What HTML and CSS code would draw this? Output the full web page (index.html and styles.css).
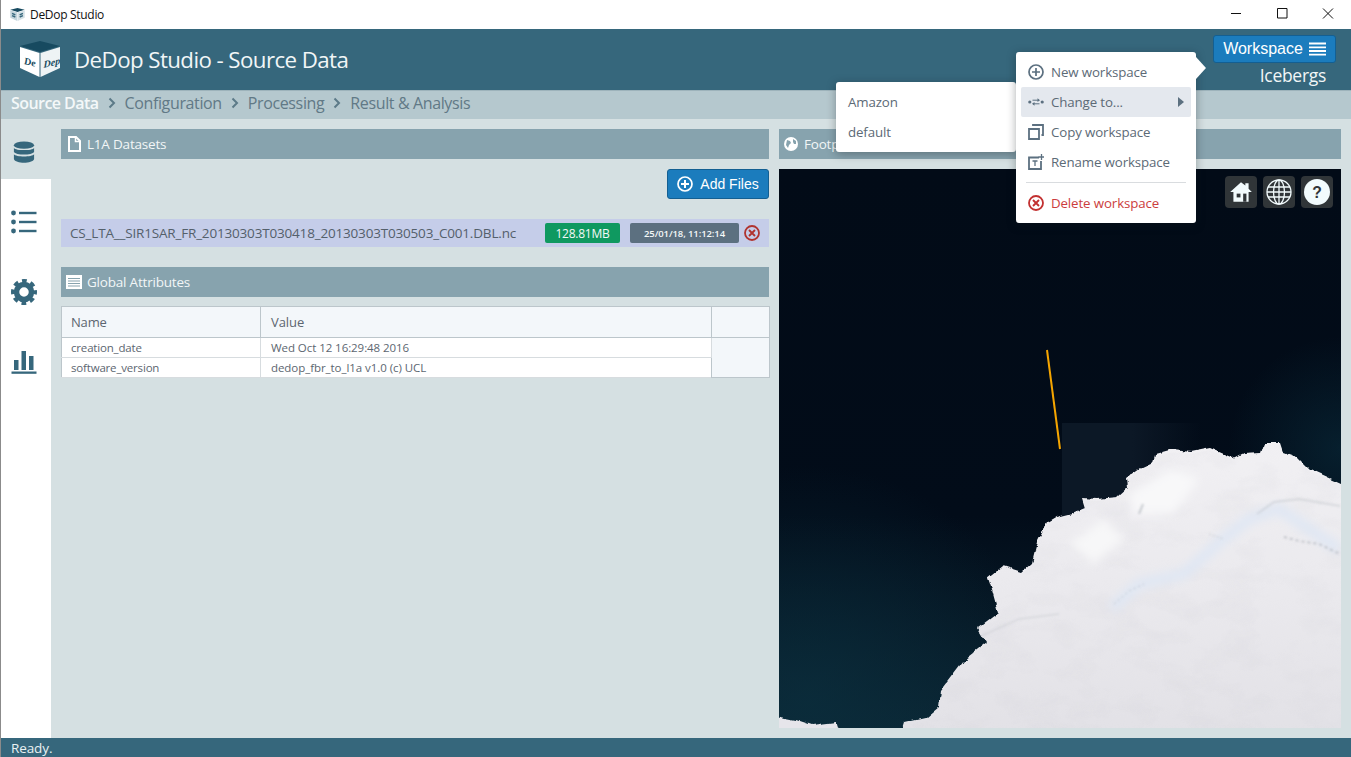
FILE: index.html
```html
<!DOCTYPE html>
<html lang="en">
<head>
<meta charset="utf-8">
<title>DeDop Studio</title>
<link rel="stylesheet" href="styles.css">
</head>
<body>
<div class="app">
  <div class="titlebar">
    <svg class="title-icon" viewBox="0 0 40 36"><path d="M20 0 40 5 20 11 0 5Z" fill="#174a60"/><path d="M0 6 19.500 12V36L0 27Z" fill="#c3d4dc"/><path d="M20.500 12 40 6V27L20.500 36Z" fill="#d5e1e6"/><path d="M5 15 14 19M5 21 14 25M26 19 35 15M26 25 35 21" stroke="#36677c" stroke-width="4"/></svg>
    <span class="title-text">DeDop Studio</span>
    <div class="winbtns">
      <svg viewBox="0 0 46 29"><path d="M18 13.500h10" stroke="#111" fill="none"/></svg>
      <svg viewBox="0 0 46 29"><path d="M18.500 8.500h9.500v9.500h-9.500z" stroke="#111" fill="none"/></svg>
      <svg viewBox="0 0 46 29"><path d="M18 8.500 28 18.500M28 8.500 18 18.500" stroke="#111" fill="none"/></svg>
    </div>
  </div>

  <header class="header">
    <div class="brand">
      <svg class="logo" viewBox="0 0 40 36">
        <path d="M20 0 40 5 20 11 0 5Z" fill="#174a60"/>
        <path d="M0 6 19.500 12V36L0 27Z" fill="#fff"/>
        <path d="M20.500 12 40 6V27L20.500 36Z" fill="#eef3f5"/>
        <text class="logo-text" transform="translate(4 23) skewY(14)">De</text>
        <text class="logo-text" transform="translate(23.500 27) skewY(-14)">Dep</text>
      </svg>
      <h1 class="app-title">DeDop Studio - Source Data</h1>
    </div>
    <div class="ws">
      <button class="ws-btn">Workspace
        <svg class="ws-burger" viewBox="0 0 17 14"><path d="M0 1.500h17M0 5.300h17M0 9h17M0 12.700h17" stroke="#fff" stroke-width="1.800"/></svg>
      </button>
      <div class="ws-name">Icebergs</div>
    </div>
  </header>

  <nav class="crumbs">
    <span class="crumb crumb-on">Source Data</span>
    <svg class="chev" viewBox="0 0 8 12"><path d="M1.500 1.500 6 6l-4.500 4.500" fill="none" stroke="#5c7a88" stroke-width="2"/></svg>
    <span class="crumb">Configuration</span>
    <svg class="chev" viewBox="0 0 8 12"><path d="M1.500 1.500 6 6l-4.500 4.500" fill="none" stroke="#5c7a88" stroke-width="2"/></svg>
    <span class="crumb">Processing</span>
    <svg class="chev" viewBox="0 0 8 12"><path d="M1.500 1.500 6 6l-4.500 4.500" fill="none" stroke="#5c7a88" stroke-width="2"/></svg>
    <span class="crumb">Result &amp; Analysis</span>
  </nav>

  <div class="body">
    <aside class="side">
      <div class="side-item side-on">
        <svg class="side-icon" viewBox="0 0 24 24"><ellipse cx="12" cy="4.500" rx="11" ry="4" fill="#36677c"/><path d="M1 7.500c2 3.200 20 3.200 22 0v4.500c-2 3.700-20 3.700-22 0ZM1 14.500c2 3.200 20 3.200 22 0v5c-1.500 5.500-20.500 5.500-22 0Z" fill="#36677c"/></svg>
      </div>
      <div class="side-item">
        <svg class="side-icon side-list" viewBox="0 0 26 24"><g fill="#36677c"><circle cx="2.500" cy="3" r="2.400"/><circle cx="2.500" cy="12" r="2.400"/><circle cx="2.500" cy="21" r="2.400"/><rect x="8" y="1.800" width="17.500" height="2.400"/><rect x="8" y="10.800" width="17.500" height="2.400"/><rect x="8" y="19.800" width="17.500" height="2.400"/></g></svg>
      </div>
      <div class="side-item">
        <svg class="side-icon side-gear" viewBox="0 0 26 26"><circle cx="13" cy="13" r="7.500" fill="none" stroke="#36677c" stroke-width="5.500"/><circle cx="13" cy="13" r="11" fill="none" stroke="#36677c" stroke-width="4" stroke-dasharray="4.640 4" stroke-dashoffset="2.300"/></svg>
      </div>
      <div class="side-item">
        <svg class="side-icon side-list" viewBox="0 0 26 24"><g fill="#36677c"><rect x="3" y="10" width="4.500" height="10"/><rect x="10.500" y="1" width="4.500" height="19"/><rect x="18" y="6" width="4.500" height="14"/><rect x="0.500" y="21.500" width="25" height="2.300"/></g></svg>
      </div>
    </aside>

    <main class="content">
      <section class="col-left">
        <div class="panel-head">
          <svg class="ph-icon" viewBox="0 0 13 16"><path d="M1 1h7l4 4v10H1Z" fill="none" stroke="#fff" stroke-width="2"/><path d="M7.500 1v4.500H12" fill="none" stroke="#fff" stroke-width="1.500"/></svg>
          <span>L1A Datasets</span>
        </div>
        <div class="toolbar">
          <button class="add-btn">
            <svg class="plus" viewBox="0 0 16 16"><circle cx="8" cy="8" r="7" fill="none" stroke="#fff" stroke-width="1.700"/><path d="M8 4v8M4 8h8" stroke="#fff" stroke-width="2"/></svg>
            Add Files
          </button>
        </div>
        <div class="file-row">
          <span class="file-name">CS_LTA__SIR1SAR_FR_20130303T030418_20130303T030503_C001.DBL.nc</span>
          <span class="badge badge-size">128.81MB</span>
          <span class="badge badge-date">25/01/18, 11:12:14</span>
          <svg class="rm" viewBox="0 0 16 16"><circle cx="8" cy="8" r="7" fill="none" stroke="#b0332f" stroke-width="1.800"/><path d="M5 5l6 6M11 5l-6 6" stroke="#b0332f" stroke-width="1.900"/></svg>
        </div>
        <div class="panel-head panel-head-tight">
          <svg class="ph-icon ph-wide" viewBox="0 0 16 14"><rect width="16" height="14" fill="#fff"/><path d="M2 3.500h12M2 6h12M2 8.500h12M2 11h12" stroke="#87a3ae"/></svg>
          <span>Global Attributes</span>
        </div>
        <table class="attrs">
          <colgroup><col class="c1"><col class="c2"><col class="c3"></colgroup>
          <thead><tr><th class="cell-name">Name</th><th>Value</th><th></th></tr></thead>
          <tbody>
            <tr><td class="cell-name">creation_date</td><td>Wed Oct 12 16:29:48 2016</td><td class="filler" rowspan="2"></td></tr>
            <tr><td class="cell-name">software_version</td><td>dedop_fbr_to_l1a v1.0 (c) UCL</td></tr>
          </tbody>
        </table>
      </section>

      <section class="col-right">
        <div class="panel-head">
          <svg class="ph-icon ph-globe" viewBox="0 0 14 14"><circle cx="7" cy="7" r="7" fill="#fff"/><path d="M3 3l3 1 1 2-2 2-1 3-2-3ZM9 2l3 2 0 3-2 0-1-2Z" fill="#87a3ae"/></svg>
          <span>Footprint</span>
        </div>
        <div class="map">
          <svg class="map-svg" viewBox="0 0 562 559" preserveAspectRatio="none">
            <defs>
              <linearGradient id="sea" x1="0" y1="0" x2="0" y2="1">
                <stop offset="0" stop-color="#020b17"/>
                <stop offset=".62" stop-color="#020c19"/>
                <stop offset="1" stop-color="#0a2533"/>
              </linearGradient>
              <radialGradient id="teal" cx=".05" cy=".95" r=".42">
                <stop offset="0" stop-color="#0b2f3e" stop-opacity=".7"/>
                <stop offset="1" stop-color="#0b2f3e" stop-opacity="0"/>
              </radialGradient>
              <radialGradient id="teal2" cx="1" cy=".5" r=".2">
                <stop offset="0" stop-color="#0a2c3c" stop-opacity=".6"/>
                <stop offset="1" stop-color="#0a2c3c" stop-opacity="0"/>
              </radialGradient>
              <linearGradient id="patch" x1="0" y1="0" x2="1" y2="0">
                <stop offset="0" stop-color="#0c1826"/>
                <stop offset=".5" stop-color="#0c1826"/>
                <stop offset="1" stop-color="#0c1826" stop-opacity="0"/>
              </linearGradient>
              <linearGradient id="snow" x1="0" y1="0" x2="0" y2="1">
                <stop offset="0" stop-color="#f1f0f3"/>
                <stop offset=".45" stop-color="#ebeaee"/>
                <stop offset="1" stop-color="#e2e1e6"/>
              </linearGradient>
              <filter id="coast" x="-5%" y="-5%" width="110%" height="110%">
                <feTurbulence type="fractalNoise" baseFrequency=".07" numOctaves="4" seed="7" result="n"/>
                <feDisplacementMap in="SourceGraphic" in2="n" scale="7" xChannelSelector="R" yChannelSelector="G" result="d"/>
                <feGaussianBlur in="d" stdDeviation=".5"/>
              </filter>
              <filter id="hills" x="0" y="0" width="100%" height="100%">
                <feTurbulence type="fractalNoise" baseFrequency=".025 .04" numOctaves="5" seed="11" result="n"/>
                <feColorMatrix in="n" type="matrix" values="0 0 0 0 .55  0 0 0 0 .55  0 0 0 0 .6  1.600 0 0 0 -.72"/>
              </filter>
              <filter id="softer" x="-10%" y="-10%" width="120%" height="120%"><feGaussianBlur stdDeviation="5"/></filter>
              <filter id="soft" x="-10%" y="-10%" width="120%" height="120%"><feGaussianBlur stdDeviation=".8"/></filter>
              <clipPath id="land-clip">
                <path d="M562 315 531 303 518 290 504 285 501 276 484 276 481 285 464 286 454 291 431 281 411 285 394 283 376 288 374 295 361 301 348 310 349 321 339 330 318 332 303 331 306 341 294 346 278 350 268 356 258 376 253 396 243 405 224 399 209 411 213 423 219 445 199 460 208 475 185 493 162 523 160 540 147 551 125 556 120 559H562Z"/>
              </clipPath>
            </defs>
            <rect width="562" height="559" fill="url(#sea)"/>
            <rect width="562" height="559" fill="url(#teal)"/>
            <rect width="562" height="559" fill="url(#teal2)"/>
            <rect x="283" y="254" width="140" height="110" fill="url(#patch)"/>
            <g filter="url(#coast)">
              <path fill="url(#snow)" d="M570 315 562 315 531 301 518 288 504 283 501 274 484 274 481 283 464 284 454 289 431 279 411 283 394 281 376 286 374 293 361 299 348 308 349 319 339 328 318 330 303 329 306 339 294 344 278 348 268 354 258 374 253 394 243 403 224 397 209 409 213 421 219 443 199 458 208 473 185 491 162 521 160 538 147 549 125 554 120 570H570Z"/>
              <path fill="#e6e5ea" d="M-10 546 17 551 32 556 57 553 62 570H-10Z"/>
            </g>
            <g clip-path="url(#land-clip)">
              <rect width="562" height="559" filter="url(#hills)" opacity=".16"/>
              <g filter="url(#softer)">
                <path d="M333 439 360 415 405 405 442 372 470 350 500 340 560 380" fill="none" stroke="#dfe7f4" stroke-width="10"/>
                <path d="M350 325 392 300 420 310 395 345 355 345Z" fill="#f8f8f9"/>
                <path d="M290 375 325 350 345 370 315 395Z" fill="#f7f7f8"/>
              </g>
              <g filter="url(#soft)" fill="none" stroke="#7d8690">
                <path d="M364 335 360 345" stroke-opacity=".4" stroke-width="2"/>
                <path d="M478 345 495 333 520 330 561 337" stroke-opacity=".25" stroke-width="1.500"/>
                <path d="M200 468 240 450 280 445" stroke-opacity=".25"/>
                <path d="M505 368 520 372 540 375 561 385" stroke-opacity=".5" stroke-width="1.500" stroke-dasharray="3 3"/>
                <path d="M335 435 350 422 365 415" stroke-opacity=".4" stroke-dasharray="2 3"/>
                <path d="M430 365 445 370" stroke-opacity=".35" stroke-dasharray="2 2"/>
              </g>
            </g>
            <path d="M268 181 281 280" stroke="#f5a500" stroke-width="2" fill="none"/>
          </svg>
          <div class="map-ctrls">
            <button class="ctrl"><svg viewBox="0 0 24 24"><path d="M12 3 2 12h3v9h14v-9h3l-3-3V4h-3v2Z" fill="#f2fbfd"/><rect x="8" y="13.500" width="3.500" height="3.500" fill="#303538"/><rect x="14" y="13.500" width="3" height="7.500" fill="#303538"/></svg></button>
            <button class="ctrl"><svg viewBox="0 0 26 26"><g fill="none" stroke="#f2fbfd" stroke-width="1.300"><circle cx="13" cy="13" r="12"/><ellipse cx="13" cy="13" rx="5.500" ry="12"/><path d="M13 1v24M2 8h22M1 13h24M2 18h22"/></g></svg></button>
            <button class="ctrl"><svg viewBox="0 0 28 28"><circle cx="14" cy="14" r="14" fill="#f2fbfd"/><text class="q" x="14" y="20.500">?</text></svg></button>
          </div>
        </div>
      </section>
    </main>
  </div>

  <footer class="status">Ready.</footer>

  <div class="menu menu-sub">
    <div class="mi"><span>Amazon</span></div>
    <div class="mi"><span>default</span></div>
  </div>
  <div class="menu menu-main">
    <div class="mi">
      <svg class="mi-icon" viewBox="0 0 16 16"><circle cx="8" cy="8" r="7" fill="none" stroke="#5c7080" stroke-width="1.700"/><path d="M8 4v8M4 8h8" stroke="#5c7080" stroke-width="1.700"/></svg>
      <span>New workspace</span>
    </div>
    <div class="mi mi-on">
      <svg class="mi-icon" viewBox="0 0 16 16"><path d="M4.500 6.200H11M11.500 9.800H5" fill="none" stroke="#5c7080"/><circle cx="1.800" cy="8" r="1.600" fill="#5c7080"/><circle cx="14.200" cy="8" r="1.600" fill="#5c7080"/><path d="M9.500 4.200 12 6.200 9.500 8ZM6.500 8 4 9.800 6.500 11.800Z" fill="#5c7080"/></svg>
      <span>Change to...</span>
      <svg class="mi-caret" viewBox="0 0 6 10"><path d="M0 0 6 5 0 10Z" fill="#5c7080"/></svg>
    </div>
    <div class="mi">
      <svg class="mi-icon" viewBox="0 0 16 16"><path d="M1 5h10v10H1Z" fill="none" stroke="#5c7080" stroke-width="1.800"/><path d="M5 2V1h10v10h-1.500" fill="none" stroke="#5c7080" stroke-width="1.800"/></svg>
      <span>Copy workspace</span>
    </div>
    <div class="mi">
      <svg class="mi-icon" viewBox="0 0 16 16"><path d="M11 3.500H1V15h12V7" fill="none" stroke="#5c7080" stroke-width="1.800"/><path d="M4.500 7h5M7 7v5M13.500 0v6M10.500 3h6" stroke="#5c7080" stroke-width="1.300"/></svg>
      <span>Rename workspace</span>
    </div>
    <div class="mdiv"></div>
    <div class="mi mi-danger">
      <svg class="mi-icon" viewBox="0 0 16 16"><circle cx="8" cy="8" r="7" fill="none" stroke="#c23030" stroke-width="1.800"/><path d="M5 5l6 6M11 5l-6 6" stroke="#c23030" stroke-width="1.900"/></svg>
      <span>Delete workspace</span>
    </div>
    <svg class="menu-tip" viewBox="0 0 10 22"><path d="M0 0 10 11 0 22Z" fill="#fff"/></svg>
  </div>
</div>
</body>
</html>
```
FILE: styles.css
```css
* { box-sizing: border-box; }
html, body { margin: 0; height: 100%; overflow: hidden; }
body { font-family: "Open Sans", "Liberation Sans", sans-serif; color: #5c6a76; }

.app { position: relative; height: 757px; display: flex; flex-direction: column; border-left: 1px solid #8b8b8b; background: #d5e0e2; }

.titlebar { height: 29px; flex: none; background: #fff; display: flex; align-items: center; padding-left: 9px; }
.title-icon { width: 15px; height: 13px; }
.title-text { margin-left: 5px; font-size: 12px; color: #111; letter-spacing: -.3px; }
.winbtns { margin-left: auto; display: flex; }
.winbtns svg { width: 46px; height: 29px; }

.header { height: 61px; flex: none; background: #36677c; display: flex; justify-content: space-between; }
.brand { display: flex; align-items: center; padding-left: 19px; }
.logo { width: 40px; height: 36px; margin-top: -1px; }
.logo-text { font-family: "Liberation Serif", serif; font-style: italic; font-weight: 700; font-size: 10px; fill: #174a60; }
.app-title { margin: 1px 0 0 14px; font-size: 22.300px; font-weight: 400; color: #f1f6f7; letter-spacing: -.58px; line-height: 1; }
.ws { display: flex; flex-direction: column; align-items: flex-end; padding: 6px 15px 0 0; }
.ws-btn { width: 123px; height: 28px; display: flex; align-items: center; justify-content: center; gap: 6px; padding: 0; background: #1b7cbd; border: 1px solid #135f92; border-radius: 3px; color: #fff; font: 400 16px "Liberation Sans", sans-serif; }
.ws-burger { width: 17px; height: 14px; }
.ws-name { margin: 1px 10px 0 0; font-size: 17.500px; color: #f1f6f7; letter-spacing: -.3px; line-height: 22px; }

.crumbs { height: 29px; flex: none; background: #b5c8ce; border-top: 1px solid #9db3bb; display: flex; align-items: center; padding: 0 0 5px 10px; font-size: 16px; letter-spacing: -.37px; }
.crumb { color: #617986; }
.crumb-on { color: #f4f8f9; font-weight: 600; letter-spacing: -.55px; }
.chev { width: 8px; height: 12px; margin: 0 9px; }

.body { flex: 1; display: flex; min-height: 0; }
.side { width: 50px; flex: none; background: #fff; display: flex; flex-direction: column; }
.side-item { height: 70px; padding: 31px 5px 0 0; display: flex; justify-content: center; align-items: flex-start; }
.side-on { height: 60px; padding-top: 21px; background: #d5e0e2; }
.side-icon { width: 22px; height: 24px; }
.side-list { width: 26px; }
.side-gear { width: 26px; height: 26px; margin-top: -1px; }

.content { flex: 1; min-width: 0; display: flex; gap: 10px; padding: 10px; }
.col-left { width: 708px; flex: none; display: flex; flex-direction: column; }
.col-right { width: 562px; flex: none; display: flex; flex-direction: column; }

.panel-head { height: 30px; flex: none; background: #87a3ae; color: #f2f6f7; display: flex; align-items: center; gap: 6px; padding-left: 7px; font-size: 13.500px; letter-spacing: -.2px; }
.panel-head-tight { gap: 5px; }
.ph-icon { width: 13px; height: 16px; flex: none; }
.ph-wide { width: 16px; height: 14px; margin-left: -2px; }
.ph-globe { width: 14px; height: 14px; margin-left: -2px; }

.toolbar { height: 60px; flex: none; display: flex; justify-content: flex-end; padding-top: 10px; }
.add-btn { width: 102px; height: 30px; display: flex; align-items: center; justify-content: center; gap: 7px; padding: 0; background: #1b7cbd; border: 1px solid #135f92; border-radius: 3px; color: #fff; font: 400 14px "Liberation Sans", sans-serif; }
.plus { width: 16px; height: 16px; }

.file-row { height: 28px; flex: none; background: #c5cde9; display: flex; align-items: center; padding-left: 9px; margin-bottom: 20px; }
.file-name { width: 475px; font-size: 13.500px; letter-spacing: -.18px; white-space: nowrap; color: #54606b; }
.badge { height: 20px; display: flex; align-items: center; justify-content: center; border-radius: 2px; color: #f4f8f8; }
.badge-size { width: 75px; background: #0f9960; font-size: 12px; letter-spacing: -.25px; }
.badge-date { width: 109px; margin-left: 10px; background: #5c7080; font-size: 9.500px; font-weight: 600; letter-spacing: -.1px; }
.rm { width: 16px; height: 16px; margin-left: 5px; }

.attrs { width: 708px; margin-top: 9px; border-collapse: collapse; table-layout: fixed; background: #fff; border: 1px solid #bcc6cb; font-size: 11.500px; letter-spacing: -.06px; color: #5c6670; }
.c1 { width: 199px; }
.c2 { width: 451px; }
.c3 { width: 58px; }
.attrs th { height: 31px; background: #f3f7fa; border: 1px solid #bcc6cb; border-top: 0; padding: 0 0 0 10px; text-align: left; font-size: 13px; font-weight: 400; color: #5c6670; }
.attrs td { height: 20px; border: 1px solid #d7dcdf; border-left-color: #bcc6cb; padding: 0 0 0 10px; white-space: nowrap; }
.attrs .cell-name { padding-left: 9px; letter-spacing: -.18px; }
.attrs .filler { background: #f3f7fa; border-color: #bcc6cb; }

.map { position: relative; flex: 1; margin-top: 10px; min-height: 0; overflow: hidden; }
.map-svg { display: block; width: 100%; height: 100%; }
.map-ctrls { position: absolute; top: 7px; right: 8px; display: flex; gap: 6px; }
.ctrl { width: 32px; height: 32px; padding: 3px; display: flex; align-items: center; justify-content: center; background: #303538; border: 0; border-radius: 4px; }
.ctrl svg { width: 100%; height: 100%; }
.q { font: 700 17px "Liberation Sans", sans-serif; fill: #303538; text-anchor: middle; }

.status { height: 19px; flex: none; background: #36677c; color: #e8f1f3; font-size: 13.500px; line-height: 20px; padding-left: 10px; letter-spacing: -.1px; }

.menu { position: absolute; width: 180px; background: #fff; border-radius: 3px; box-shadow: 0 2px 10px rgba(16, 22, 26, .35); font-size: 13.300px; letter-spacing: -.12px; color: #5c6a76; }
.menu-main { left: 1015px; top: 52px; height: 171px; padding: 5px; }
.menu-sub { left: 835px; top: 82px; height: 70px; padding: 5px; }
.mi { height: 30px; display: flex; align-items: center; padding: 0 7px; border-radius: 2px; white-space: nowrap; }
.mi-on { background: #e4e8ee; }
.mi-icon { width: 16px; height: 16px; margin-right: 7px; flex: none; }
.mi-caret { width: 6px; height: 10px; margin-left: auto; }
.mi-danger { color: #cc3d3d; }
.mdiv { height: 1px; margin: 5px; background: #d9dcdf; }
.menu-tip { position: absolute; left: 180px; top: 5px; width: 10px; height: 22px; }
```
